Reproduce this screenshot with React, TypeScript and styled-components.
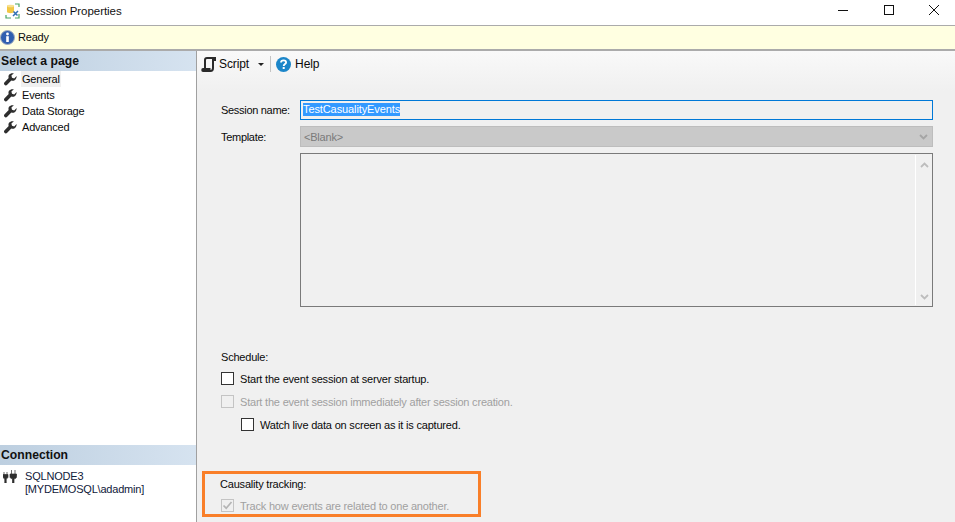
import React from "react";
import styled, { createGlobalStyle } from "styled-components";

const Global = createGlobalStyle`
  html, body { margin: 0; padding: 0; background: #f0f0f0; }
  body { font-family: "Liberation Sans", Arial, sans-serif; font-size: 11px; letter-spacing: -0.2px; color: #0a0a0a; }
  * { box-sizing: border-box; }
`;

const Shell = styled.div`
  width: 955px; height: 522px; overflow: hidden; display: flex; flex-direction: column; background: #f0f0f0;
`;
const TitleBar = styled.div`
  height: 26px; flex: none; background: #fff; border-bottom: 1px solid #ababab; display: flex; align-items: center; padding: 0 0 4px 5px; gap: 5px;
`;
const TitleText = styled.span`font-size: 11.5px; letter-spacing: -0.05px; flex: 1; color: #111;`;
const WinButtons = styled.div`display: flex; align-items: center; padding: 0 16px 1px 0; gap: 35.5px;`;
const InfoBar = styled.div`
  height: 25px; flex: none; background: #ffffe1; border-bottom: 2px solid #ababab; display: flex; align-items: center; padding: 0 0 1px 0; gap: 3px;
`;
const Main = styled.div`flex: 1; display: flex; min-height: 0;`;
const Sidebar = styled.div`
  width: 197px; flex: none; background: #fff; border-right: 1px solid #a0a0a0; display: flex; flex-direction: column; justify-content: space-between;
`;
const SideHeader = styled.div`
  height: 20px; background: linear-gradient(90deg, #bdcfe0 0%, #d6e3f0 100%); font-weight: bold; font-size: 12.2px; letter-spacing: 0; display: flex; align-items: center; padding-left: 1px; color: #111;
`;
const NavList = styled.div`display: flex; flex-direction: column;`;
const NavItem = styled.div`height: 16px; display: flex; align-items: center; padding-left: 4px; gap: 5px;`;
const NavLabel = styled.span<{ $active?: boolean }>`
  background: ${p => (p.$active ? "#f0f0f0" : "transparent")}; line-height: 16px; padding: 0 1px; margin-left: -1px;
`;
const ConnBody = styled.div`height: 57px; display: flex; padding: 5px 0 0 3px; gap: 8px;`;
const ConnText = styled.div`line-height: 13px; color: #10203a;`;

const Content = styled.div`flex: 1; min-width: 0; display: flex; flex-direction: column; background: linear-gradient(180deg, #f9f9f9 0, #f0f0f0 40px);`;
const Toolbar = styled.div`height: 26px; flex: none; display: flex; align-items: center; padding-left: 4px; font-size: 12px; letter-spacing: -0.1px;`;
const ToolBtn = styled.div<{ $gap: number }>`display: flex; align-items: center; gap: ${p => p.$gap}px;`;
const Caret = styled.span`width: 0; height: 0; border-left: 3px solid transparent; border-right: 3px solid transparent; border-top: 3px solid #222; margin-left: 6px;`;
const Sep = styled.span`width: 1px; height: 16px; background: #c4c4c4; margin: 0 5px 0 6px;`;
const Form = styled.div`padding: 22px 22px 0 24px; display: flex; flex-direction: column;`;
const Row = styled.div`display: flex; align-items: center; height: 21px; margin-bottom: 6px;`;
const Label = styled.label`width: 79px; flex: none; letter-spacing: -0.3px;`;
const NameInput = styled.div`
  flex: 1; height: 20px; border: 1px solid #0078d7; background: #f0f0f0; display: flex; align-items: center; padding-left: 2px;
`;
const Selected = styled.span`background: #3399ff; color: #fff; line-height: 13px; letter-spacing: -0.1px;`;
const TemplateSelect = styled.div`
  flex: 1; height: 21px; background: #c9c9c9; border: 1px solid #bdbdbd; color: #7a7a7a; display: flex; align-items: center; justify-content: space-between; padding: 0 4px 0 3px;
`;
const DescRow = styled.div`display: flex; justify-content: flex-end;`;
const DescBox = styled.div`
  width: 633px; height: 154px; border: 1px solid #7a7a7a; background: #f0f0f0; display: flex; justify-content: flex-end;
`;
const ScrollTrack = styled.div`
  width: 17px; margin: 1px 0; border-left: 1px solid #fff; display: flex; flex-direction: column; justify-content: space-between; align-items: center; padding: 7px 0 5px;
`;
const GroupTitle = styled.div`line-height: 14px;`;
const Schedule = styled.div`margin-top: 43px; display: flex; flex-direction: column;`;
const CheckRow = styled.div<{ $indent?: number; $disabled?: boolean }>`
  height: 23px; flex: none; display: flex; align-items: center; gap: 6px; padding-left: ${p => p.$indent ?? 0}px; color: ${p => (p.$disabled ? "#a0a0a0" : "#0a0a0a")};
`;
const Box = styled.span<{ $disabled?: boolean }>`
  width: 13px; height: 13px; flex: none; border: 1px solid ${p => (p.$disabled ? "#c4c4c4" : "#333")}; background: ${p => (p.$disabled ? "#f0f0f0" : "#fff")}; display: inline-flex; align-items: center; justify-content: center;
`;
const ScheduleRows = styled.div`margin-top: 3px; display: flex; flex-direction: column;`;
const Highlight = styled.div`
  margin: 35px 0 0 -19px; width: 279px; height: 46px; border: 3px solid #f97f29; padding: 3px 0 0 15px; display: flex; flex-direction: column; gap: 3px;
`;

const Wrench = () => (
  <svg width="13" height="13" viewBox="0 0 13 13">
    <path d="M12.6 3 10.2 5.4 8 4.8 7.4 2.6 9.9.3C8-.2 6 .4 5 1.8c-.7 1.1-.7 2.4-.3 3.3L.6 9.2c-.8.8-.8 1.9-.1 2.6.7.8 1.9.8 2.7 0l4.1-4.2c1.1.4 2.4.3 3.4-.4 1.4-.9 2.1-2.6 1.9-4.2z" fill="#2e2e2e" />
  </svg>
);
const Check = () => (
  <svg width="11" height="11" viewBox="0 0 11 11"><path d="M1.5 5.5 4.2 8.2 9.5 2" fill="none" stroke="#b5b5b5" strokeWidth="1.7" /></svg>
);
const Chevron = ({ up, color = "#bdbdbd" }: { up?: boolean; color?: string }) => (
  <svg width="9" height="6" viewBox="0 0 9 6">
    <path d={up ? "M1 5 4.5 1.5 8 5" : "M1 1 4.5 4.5 8 1"} fill="none" stroke={color} strokeWidth="1.8" />
  </svg>
);

export default function App() {
  return (
    <Shell>
      <Global />
      <TitleBar>
        <svg width="16" height="16" viewBox="0 0 16 16">
          <path d="M2 3C2 1.5 9 1.5 9 3V9C9 10.5 2 10.5 2 9Z" fill="#f2c744" />
          <ellipse cx="5.5" cy="3" rx="3.5" ry="1.3" fill="#f8e08e" />
          <path d="M10 1H14V4M14 11V15H10M6 15H1V12" fill="none" stroke="#4aa564" strokeWidth="1.2" />
          <path d="M8 13 13 8M8.5 8.5 12.5 12.5" stroke="#2f6fb5" strokeWidth="1.5" />
        </svg>
        <TitleText>Session Properties</TitleText>
        <WinButtons>
          <svg width="10" height="10" viewBox="0 0 10 10"><path d="M0 5.5H10" stroke="#111" /></svg>
          <svg width="10" height="10" viewBox="0 0 10 10"><rect x=".5" y=".5" width="9" height="9" fill="none" stroke="#111" /></svg>
          <svg width="10" height="10" viewBox="0 0 10 10"><path d="M0 0 10 10M10 0 0 10" stroke="#111" /></svg>
        </WinButtons>
      </TitleBar>
      <InfoBar>
        <svg width="15" height="15" viewBox="0 0 15 15">
          <circle cx="7.5" cy="7.5" r="7" fill="#2f5fb0" stroke="#a3aec0" />
          <circle cx="7.5" cy="4" r="1.4" fill="#fff" />
          <rect x="6.2" y="6.2" width="2.6" height="5.8" fill="#fff" />
        </svg>
        <span>Ready</span>
      </InfoBar>
      <Main>
        <Sidebar>
          <div>
            <SideHeader>Select a page</SideHeader>
            <NavList>
              <NavItem><Wrench /><NavLabel $active>General</NavLabel></NavItem>
              <NavItem><Wrench /><NavLabel>Events</NavLabel></NavItem>
              <NavItem><Wrench /><NavLabel>Data Storage</NavLabel></NavItem>
              <NavItem><Wrench /><NavLabel>Advanced</NavLabel></NavItem>
            </NavList>
          </div>
          <div>
            <SideHeader>Connection</SideHeader>
            <ConnBody>
              <svg width="14" height="13" viewBox="0 0 14 13">
                <path d="M0 4.5H5V6.8C5 8 4 8.6 3.2 8.8V13H1.8V8.8C1 8.6 0 8 0 6.8ZM1 2V4.5M4 2V4.5M7 4H13.5V6.8C13.5 8 12.5 8.6 11 8.8V13H9.5V8.8C8 8.6 7 8 7 6.8ZM8.5 0V4M12 0V4" fill="#2e2e2e" stroke="#2e2e2e" strokeWidth=".7" />
              </svg>
              <ConnText>SQLNODE3<br />[MYDEMOSQL\adadmin]</ConnText>
            </ConnBody>
          </div>
        </Sidebar>
        <Content>
          <Toolbar>
            <ToolBtn $gap={3}>
              <svg width="15" height="15" viewBox="0 0 15 15">
                <path d="M4 12V3C4 1.5 5 1 6 1H14V3H12V11C12 13 11 14 9.5 14H2C1 14 1 12 2 12H8.5V13" fill="none" stroke="#2a2a2a" strokeWidth="2" />
              </svg>
              <span>Script</span>
              <Caret />
            </ToolBtn>
            <Sep />
            <ToolBtn $gap={4}>
              <svg width="15" height="15" viewBox="0 0 15 15">
                <circle cx="7.5" cy="7.5" r="7.5" fill="#1c86c9" />
                <path d="M5 5.6C5 4.2 6.2 3.4 7.6 3.4 9 3.4 10.1 4.2 10.1 5.4 10.1 7 7.7 7 7.7 9" fill="none" stroke="#fff" strokeWidth="1.8" />
                <rect x="6.7" y="10" width="2" height="2" fill="#fff" />
              </svg>
              <span>Help</span>
            </ToolBtn>
          </Toolbar>
          <Form>
            <Row>
              <Label>Session name:</Label>
              <NameInput><Selected>TestCasualityEvents</Selected></NameInput>
            </Row>
            <Row>
              <Label>Template:</Label>
              <TemplateSelect>&lt;Blank&gt;<Chevron color="#a5a5a5" /></TemplateSelect>
            </Row>
            <DescRow>
              <DescBox>
                <ScrollTrack><Chevron up /><Chevron /></ScrollTrack>
              </DescBox>
            </DescRow>
            <Schedule>
              <GroupTitle>Schedule:</GroupTitle>
              <ScheduleRows>
                <CheckRow><Box /><span>Start the event session at server startup.</span></CheckRow>
                <CheckRow $disabled><Box $disabled /><span>Start the event session immediately after session creation.</span></CheckRow>
                <CheckRow $indent={20}><Box /><span>Watch live data on screen as it is captured.</span></CheckRow>
              </ScheduleRows>
            </Schedule>
            <Highlight>
              <GroupTitle>Causality tracking:</GroupTitle>
              <CheckRow $disabled $indent={1}><Box $disabled><Check /></Box><span>Track how events are related to one another.</span></CheckRow>
            </Highlight>
          </Form>
        </Content>
      </Main>
    </Shell>
  );
}
